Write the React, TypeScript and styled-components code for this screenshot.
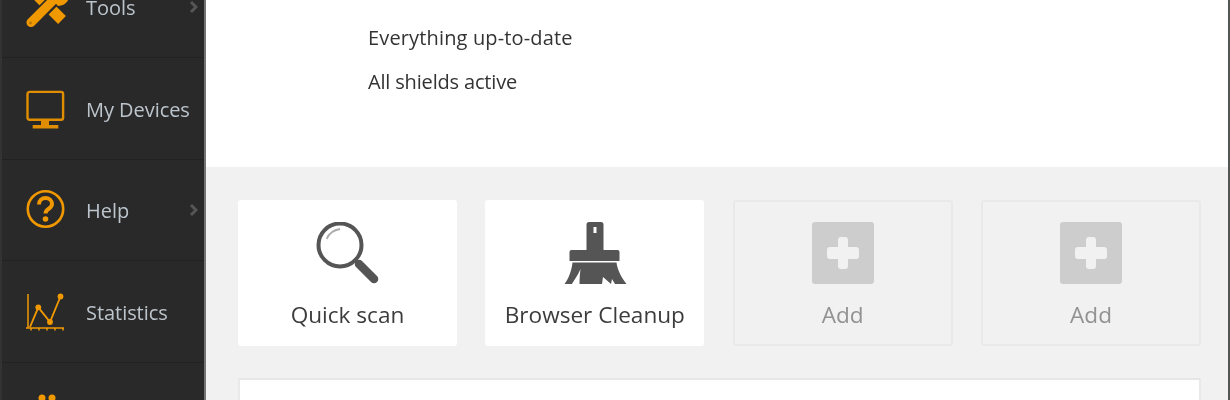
import React from "react";
import styled, { createGlobalStyle } from "styled-components";

const Global = createGlobalStyle`
  html, body { margin: 0; padding: 0; width: 1230px; height: 400px; overflow: hidden; background: #fff; }
  * { box-sizing: border-box; }
`;
const Frame = styled.div`
  display: flex; width: 1230px; height: 400px; overflow: hidden;
  font-family: "Open Sans", "Noto Sans", sans-serif; border-right: 2px solid #555;
  filter: blur(0.45px);
`;
const Sidebar = styled.nav`
  flex: 0 0 206px; height: 400px; overflow: hidden; background: #292929;
  border-left: 2px solid #333; border-right: 2px solid #747474;
`;
const NavList = styled.div` margin-top: -44px; display: flex; flex-direction: column; `;
const NavItem = styled.div<{ $h?: number; $top?: boolean }>`
  height: ${p => p.$h ?? 102}px; display: flex; align-items: ${p => p.$top ? "flex-start" : "center"};
  padding: ${p => p.$top ? "30px" : "0"} 6px 0 24px;
  border-bottom: 1px solid #222; flex: none;
`;
const NavIcon = styled.svg` width: 42px; height: 42px; flex: none; color: #f09800; `;
const NavLabel = styled.span` margin-left: 18px; padding-top: 1px; flex: 1; color: #bcc4cc; font-size: 20px; letter-spacing: -.05px; white-space: nowrap; `;
const Chevron = styled.svg` width: 9px; height: 14px; flex: none; color: #555; `;
const Main = styled.main` flex: 1; display: flex; flex-direction: column; min-width: 0; `;
const Status = styled.section`
  height: 167px; flex: none; background: #fff; padding: 25px 0 0 162px;
  display: flex; flex-direction: column; gap: 19px;
`;
const StatusLine = styled.div<{ $track: number }>`
  font-size: 20px; line-height: 25px; color: #333; white-space: nowrap; letter-spacing: ${p => p.$track}px;
`;
const Content = styled.section` flex: 1; background: #f1f1f1; padding: 33px 27px 0 32px; display: flex; flex-direction: column; gap: 32px; `;
const Cards = styled.div` display: flex; justify-content: space-between; `;
const Card = styled.div<{ $empty?: boolean }>`
  width: ${p => p.$empty ? 220 : 219}px; height: 146px; border-radius: 3px; flex: none;
  background: ${p => p.$empty ? "#f1f1f1" : "#fff"};
  border: ${p => p.$empty ? "2px solid #e9e9e9" : "none"};
  display: flex; flex-direction: column; align-items: center; padding-top: ${p => p.$empty ? 20 : 22}px;
`;
const CardIcon = styled.svg` width: 64px; height: 64px; flex: none; display: block; color: #555; `;
const CardLabel = styled.div<{ $empty?: boolean }>`
  margin-top: 14px; font-size: 22.6px; line-height: 29px; white-space: nowrap;
  color: ${p => p.$empty ? "#929292" : "#3c3c3c"};
`;
const Panel = styled.div`
  height: 60px; background: #fff; border-top: 2px solid #e6e6e6;
  border-left: 2px solid #e9e9e9; border-right: 2px solid #e9e9e9;
`;

const ChevronIcon = () => (
  <Chevron viewBox="0 0 9 14"><path d="M2 2l5 5-5 5" fill="none" stroke="currentColor" strokeWidth="3" /></Chevron>
);

const AddCard = () => (
  <Card $empty>
    <CardIcon viewBox="0 0 64 64">
      <rect x="1" y="0" width="62" height="62" rx="3" fill="#cdcdcd" />
      <rect x="27" y="15" width="10" height="32" rx="3" fill="#f1f1f1" />
      <rect x="16" y="25" width="32" height="12" rx="3" fill="#f1f1f1" />
    </CardIcon>
    <CardLabel $empty>Add</CardLabel>
  </Card>
);

export default function App() {
  return (
    <Frame>
      <Global />
      <Sidebar>
        <NavList>
          <NavItem>
            <NavIcon viewBox="0 0 42 42">
              <path d="M10 8L36 34" stroke="currentColor" strokeWidth="11" fill="none" />
              <path d="M5 37L32 10" stroke="#292929" strokeWidth="13" fill="none" />
              <path d="M5 36.500L31 10.500" stroke="currentColor" strokeWidth="9" strokeLinecap="round" fill="none" />
              <path d="M24 11c0-6 4-10 10-10l3 1-5 5 1 4 4 1 5-5 1 3c0 6-5 10-11 10z" fill="currentColor" />
              <circle cx="4.500" cy="37" r="1.400" fill="#b87600" />
            </NavIcon>
            <NavLabel>Tools</NavLabel>
            <ChevronIcon />
          </NavItem>
          <NavItem>
            <NavIcon viewBox="0 0 42 42">
              <rect x="1.500" y="3.900" width="35.600" height="27.800" rx="2" fill="none" stroke="#e08e00" strokeWidth="2.400" />
              <path d="M15 32.700h8V37h-8zM6.700 37h25.600v3.400H6.700z" fill="#e08e00" />
            </NavIcon>
            <NavLabel>My Devices</NavLabel>
          </NavItem>
          <NavItem $h={101}>
            <NavIcon viewBox="0 0 42 42">
              <circle cx="19.500" cy="20" r="17.700" fill="none" stroke="currentColor" strokeWidth="2.600" />
              <path d="M13 15.500c0-4 3-6.500 6.500-6.500s6.500 2.500 6.500 6c0 5-6.500 4.500-6.500 9.500" fill="none" stroke="currentColor" strokeWidth="4" />
              <circle cx="19.500" cy="30" r="2.800" fill="currentColor" />
            </NavIcon>
            <NavLabel>Help</NavLabel>
            <ChevronIcon />
          </NavItem>
          <NavItem>
            <NavIcon viewBox="0 0 42 42">
              <path d="M2 3v34M0 37h38M5 37v2.500M13 37v2.500M21 37v2.500M29 37v2.500M37 37v2.500" stroke="currentColor" strokeWidth="1.500" fill="none" />
              <path d="M4 36L12.300 16.300L24 31L34.500 5.500" stroke="currentColor" strokeWidth="1.900" fill="none" />
              <circle cx="12.300" cy="16.300" r="2.900" fill="currentColor" />
              <circle cx="24" cy="31" r="2.900" fill="currentColor" />
              <circle cx="34.500" cy="5.500" r="2.900" fill="currentColor" />
            </NavIcon>
            <NavLabel>Statistics</NavLabel>
          </NavItem>
          <NavItem $h={60} $top>
            <NavIcon viewBox="0 0 42 42">
              <circle cx="16" cy="5" r="3.500" fill="currentColor" />
              <circle cx="26" cy="5" r="3.500" fill="currentColor" />
            </NavIcon>
          </NavItem>
        </NavList>
      </Sidebar>
      <Main>
        <Status>
          <StatusLine $track={0.15}>Everything up-to-date</StatusLine>
          <StatusLine $track={-0.17}>All shields active</StatusLine>
        </Status>
        <Content>
          <Cards>
            <Card>
              <CardIcon viewBox="0 0 64 64">
                <circle cx="24" cy="23" r="21.500" fill="none" stroke="currentColor" strokeWidth="4" />
                <path d="M10.700 17c2-5 7-9 13.300-10" fill="none" stroke="#aaa" strokeWidth="1.800" />
                <path d="M38 37l5 5" stroke="currentColor" strokeWidth="3.500" fill="none" />
                <path d="M43 42L58 57" stroke="currentColor" strokeWidth="8.500" strokeLinecap="round" fill="none" />
              </CardIcon>
              <CardLabel>Quick scan</CardLabel>
            </Card>
            <Card>
              <CardIcon viewBox="0 0 64 64">
                <path fillRule="evenodd" fill="currentColor" d="M26 0h12a2.500 2.500 0 0 1 2.500 2.500V28h-17V2.500A2.500 2.500 0 0 1 26 0zM30.500 5v6h3V5z" />
                <path fill="currentColor" d="M8.500 28h46a2 2 0 0 1 2 2v9h-50v-9a2 2 0 0 1 2-2z" />
                <path fill="currentColor" d="M9.500 40.500h44c1 8 5 15 10 21.500H52l-3-5-1 5-8-7-1 7H16.500c0-6 .5-11 1-15-3 7-7 12-8.500 15H1.500c4-5 7-13 8-21.500z" />
              </CardIcon>
              <CardLabel>Browser Cleanup</CardLabel>
            </Card>
            <AddCard />
            <AddCard />
          </Cards>
          <Panel />
        </Content>
      </Main>
    </Frame>
  );
}
